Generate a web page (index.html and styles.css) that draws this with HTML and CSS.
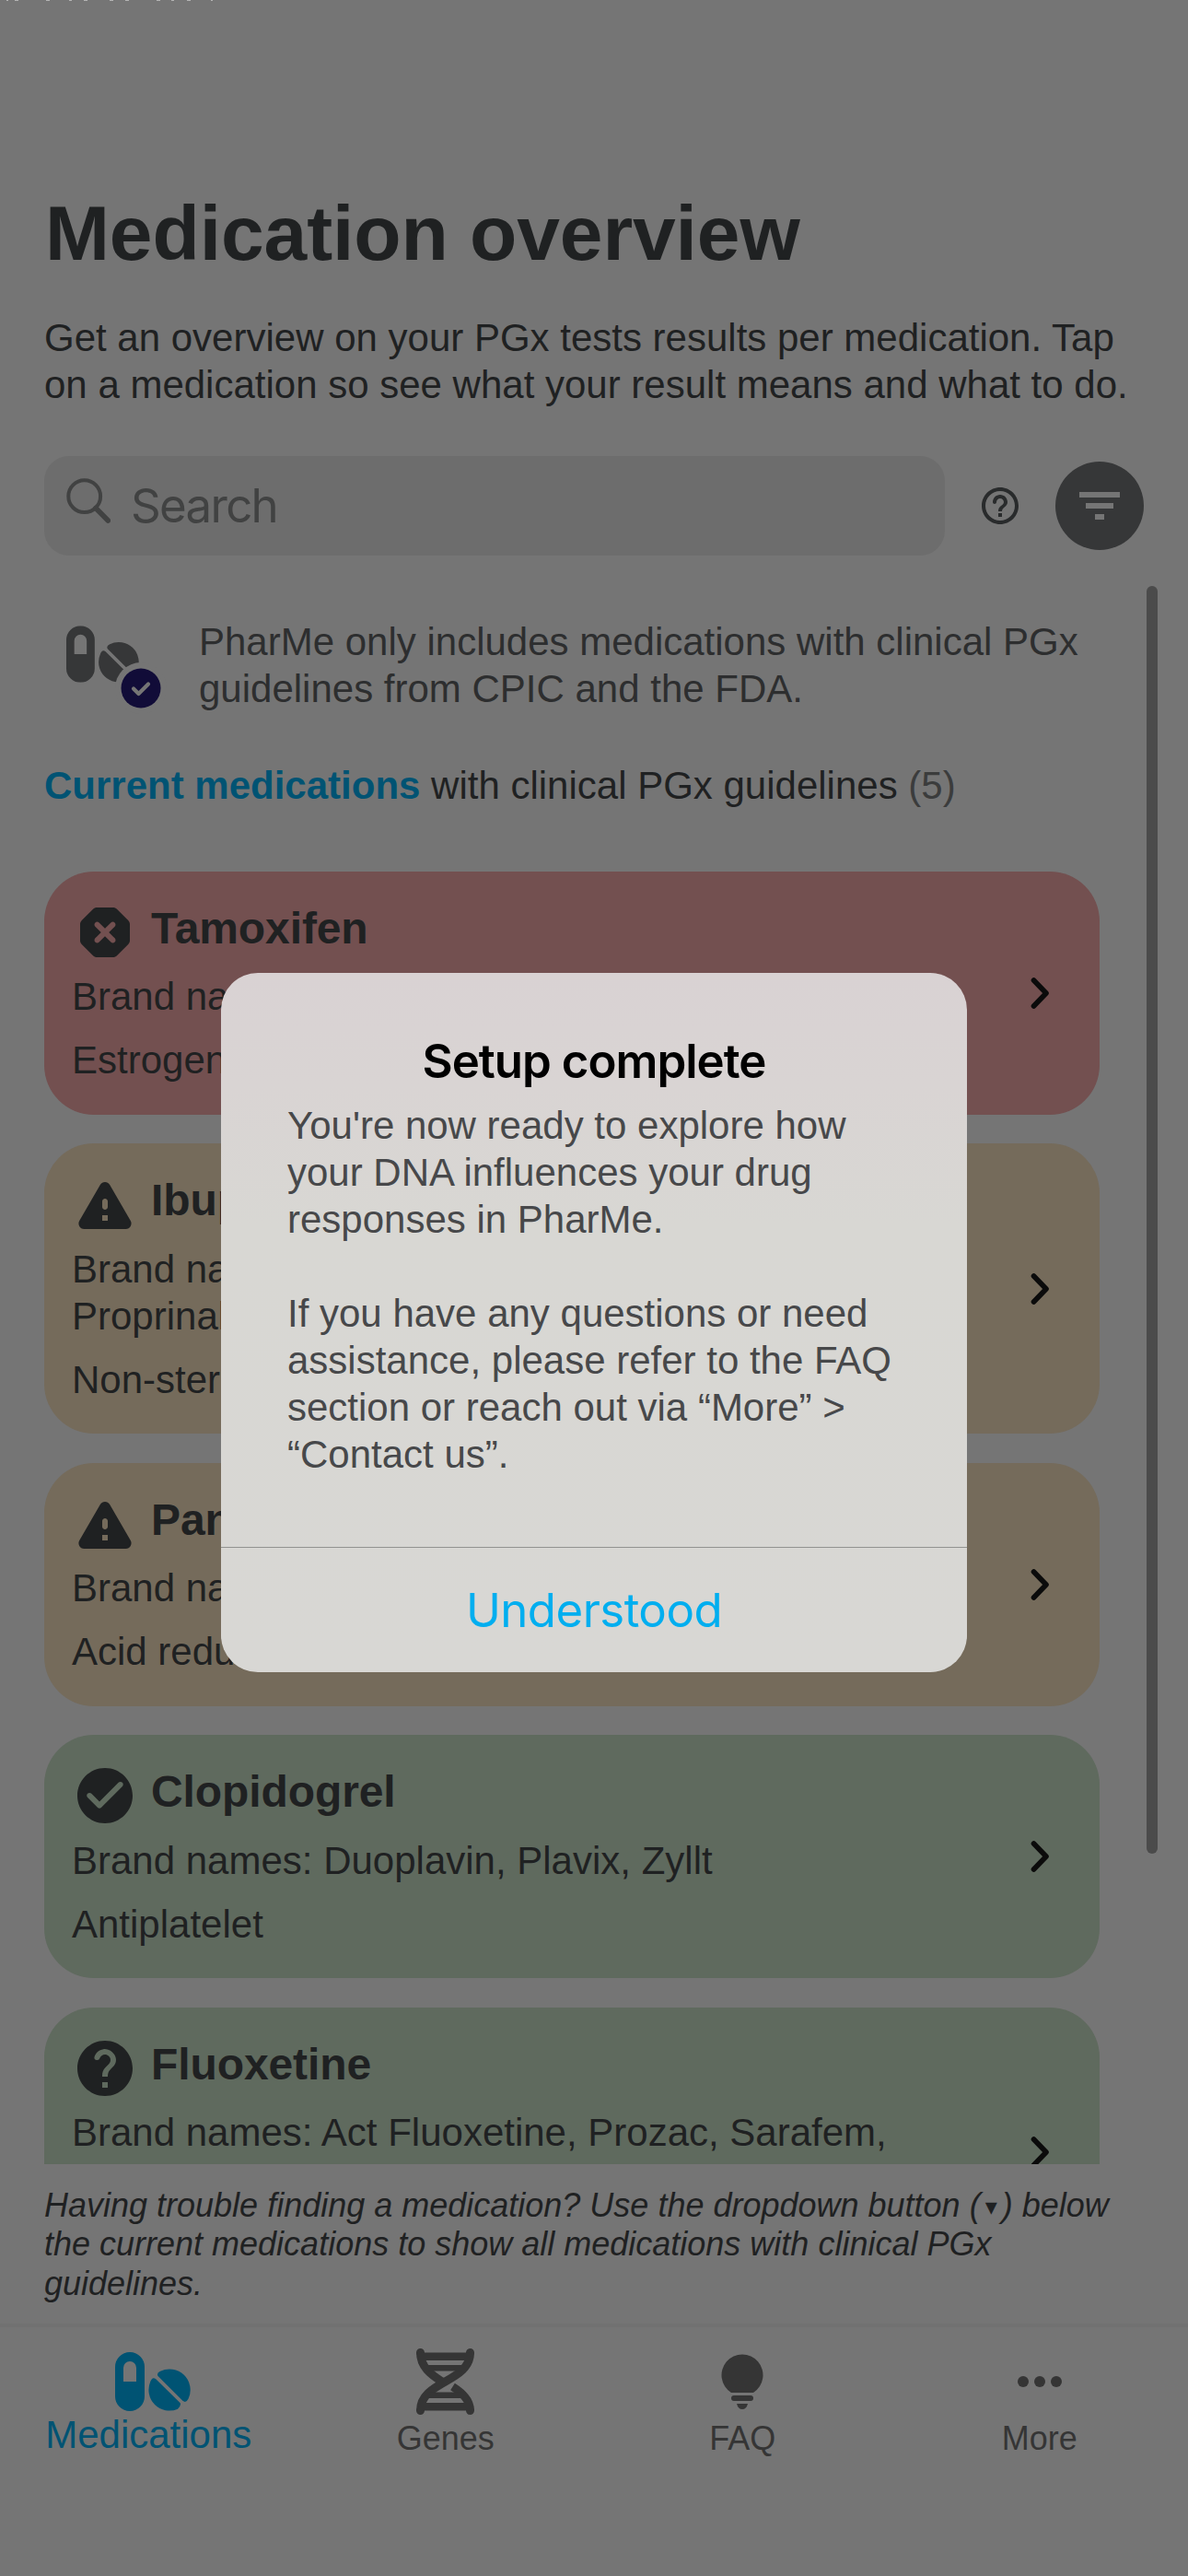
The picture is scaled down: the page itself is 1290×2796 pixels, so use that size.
FILE: index.html
```html
<!DOCTYPE html>
<html lang="en">
<head>
<meta charset="utf-8">
<title>Medication overview</title>
<link rel="stylesheet" href="styles.css">
</head>
<body>
<svg width="0" height="0" class="defs" aria-hidden="true">
  <symbol id="danger" viewBox="0 0 24 24"><path d="M14.9 3H9.1c-.53 0-1.04.21-1.42.59L3.59 7.68C3.21 8.06 3 8.57 3 9.1v5.8c0 .53.21 1.04.59 1.42l4.09 4.09c.38.38.89.59 1.42.59h5.8c.53 0 1.04-.21 1.42-.59l4.09-4.09c.38-.38.59-.89.59-1.42V9.1c0-.53-.21-1.04-.59-1.42l-4.09-4.09C15.94 3.21 15.43 3 14.9 3zm.64 12.54c-.39.39-1.02.39-1.41 0L12 13.41l-2.12 2.12c-.39.39-1.02.39-1.41 0-.39-.39-.39-1.02 0-1.41L10.59 12 8.46 9.88c-.39-.39-.39-1.02 0-1.41.39-.39 1.02-.39 1.41 0L12 10.59l2.12-2.12c.39-.39 1.02-.39 1.41 0 .39.39.39 1.02 0 1.41L13.41 12l2.12 2.12c.4.39.4 1.03.01 1.42z"/></symbol>
  <symbol id="warn" viewBox="0 0 24 24"><path d="M4.47 21h15.06c1.54 0 2.5-1.67 1.73-3L13.73 4.99c-.77-1.33-2.69-1.33-3.46 0L2.74 18c-.77 1.33.19 3 1.73 3zM12 14c-.55 0-1-.45-1-1v-2c0-.55.45-1 1-1s1 .45 1 1v2c0 .55-.45 1-1 1zm1 4h-2v-2h2v2z"/></symbol>
  <symbol id="check" viewBox="0 0 24 24"><path d="M12 2C6.48 2 2 6.48 2 12s4.48 10 10 10 10-4.48 10-10S17.52 2 12 2zM9.29 16.29 5.7 12.7c-.39-.39-.39-1.02 0-1.41.39-.39 1.02-.39 1.41 0L10 14.17l6.88-6.88c.39-.39 1.02-.39 1.41 0 .39.39.39 1.02 0 1.41l-7.59 7.59c-.38.39-1.02.39-1.41 0z"/></symbol>
  <symbol id="help" viewBox="0 0 24 24"><path d="M12 2C6.48 2 2 6.48 2 12s4.48 10 10 10 10-4.48 10-10S17.52 2 12 2zm1 17h-2v-2h2v2zm2.07-7.75-.9.92c-.5.51-.86.97-1.04 1.69-.08.32-.13.68-.13 1.14h-2v-.5c0-.46.08-.9.22-1.31.2-.58.53-1.1.95-1.52l1.24-1.26c.46-.44.68-1.1.55-1.8-.13-.72-.69-1.33-1.39-1.53-1.11-.31-2.14.32-2.47 1.27-.12.37-.43.65-.82.65h-.3C8.4 9 8 8.44 8.16 7.88c.43-1.47 1.68-2.59 3.23-2.83 1.52-.24 2.97.55 3.87 1.8 1.18 1.63.83 3.38-.19 4.4z"/></symbol>
  <symbol id="chevron" viewBox="0 0 24 36"><path d="M4.500 4L18 18 4.500 32" fill="none" stroke="currentColor" stroke-width="5.600" stroke-linecap="round" stroke-linejoin="round"/></symbol>
  <symbol id="capsule" viewBox="0 0 82 64"><path fill-rule="evenodd" d="M16 0a16 16 0 0 1 16 16v32a16 16 0 0 1-32 0V16A16 16 0 0 1 16 0zM9 32h14V17a7 7 0 0 0-14 0z"/></symbol>
  <symbol id="tablet" viewBox="0 0 82 64"><path d="M49 20.800A22.600 22.600 0 0 1 79.600 50.500q-2.300 5-6 2.600L46.500 26q-1.800-3.200 2.500-5.200z"/><path d="M38.300 32q2-5.500 5.700-3L70.500 55q1.800 2.500-2.500 6.700A22.600 22.600 0 0 1 38.300 32z"/></symbol>
</svg>

<div class="screen">
  <svg class="edge" width="240" height="1" viewBox="0 0 240 1"><path d="M7 0h2v1H7zM16 0h4v1h-4zM50 0h4v1h-4zM75 0h3v1h-3zM91 0h4v1h-4zM119 0h4v1h-4zM136 0h4v1h-4zM170 0h4v1h-4zM186 0h3v1h-3zM203 0h4v1h-4zM229 0h2v1h-2z"/></svg>
  <header class="intro">
    <h1>Medication overview</h1>
    <p>Get an overview on your PGx tests results per medication. Tap<br>on a medication so see what your result means and what to do.</p>
  </header>

  <div class="tools">
    <div class="search">
      <svg class="line" width="48" height="50" viewBox="0 0 48 50"><circle cx="19.700" cy="19.700" r="17.400" stroke-width="4"/><path d="M32 32.500l13.300 13.500" stroke-width="5.600" stroke-linecap="round"/></svg>
      <span>Search</span>
    </div>
    <svg class="help" width="48" height="48" viewBox="0 0 24 24"><path d="M12 2C6.480 2 2 6.480 2 12s4.480 10 10 10 10-4.480 10-10S17.520 2 12 2zm0 18c-4.410 0-8-3.590-8-8s3.590-8 8-8 8 3.590 8 8-3.590 8-8 8zm-1-4h2v2h-2v-2zm1-10c-2.210 0-4 1.790-4 4 0 .55.45 1 1 1s1-.45 1-1c0-1.100.9-2 2-2s2 .9 2 2c0 2-3 1.750-3 5h2c0-2.250 3-2.500 3-5 0-2.210-1.790-4-4-4z"/></svg>
    <div class="filter"><i></i><i></i><i></i></div>
  </div>

  <main class="list">
    <div class="note">
      <div class="pills">
        <svg width="79" height="62" viewBox="0 0 82 64"><use href="#capsule"/><use href="#tablet"/></svg>
        <svg class="badge" width="56" height="56" viewBox="0 0 56 56"><circle class="ring" cx="28" cy="28" r="28"/><circle class="disc" cx="28" cy="28" r="21.500"/><path d="M20 28.500l5.500 5.500L36 23.500" fill="none" stroke="#757575" stroke-width="4.200" stroke-linecap="round" stroke-linejoin="round"/></svg>
      </div>
      <p>PharMe only includes medications with clinical PGx<br>guidelines from CPIC and the FDA.</p>
    </div>
    <h2><b>Current medications</b> with clinical PGx guidelines <small>(5)</small></h2>

    <div class="cards">
      <section class="card red">
        <div><h3><svg><use href="#danger"/></svg>Tamoxifen</h3><p>Brand names: Nolvadex</p><p class="kind">Estrogen modulator</p></div>
        <svg class="go"><use href="#chevron"/></svg>
      </section>
      <section class="card tan">
        <div><h3><svg><use href="#warn"/></svg>Ibuprofen</h3><p>Brand names: Advil, Motrin,<br>Proprinal</p><p class="kind">Non-steroidal</p></div>
        <svg class="go"><use href="#chevron"/></svg>
      </section>
      <section class="card tan">
        <div><h3><svg><use href="#warn"/></svg>Pantoprazole</h3><p>Brand names: Protonix</p><p class="kind">Acid reducer</p></div>
        <svg class="go"><use href="#chevron"/></svg>
      </section>
      <section class="card green">
        <div><h3><svg><use href="#check"/></svg>Clopidogrel</h3><p>Brand names: Duoplavin, Plavix, Zyllt</p><p class="kind">Antiplatelet</p></div>
        <svg class="go"><use href="#chevron"/></svg>
      </section>
      <section class="card green">
        <div><h3><svg><use href="#help"/></svg>Fluoxetine</h3><p>Brand names: Act Fluoxetine, Prozac, Sarafem,<br>Symbyax</p><p class="kind">Antidepressant</p></div>
        <svg class="go"><use href="#chevron"/></svg>
      </section>
    </div>
    <div class="thumb"></div>
  </main>

  <p class="trouble">Having trouble finding a medication? Use the dropdown button (<span>▾</span>) below<br>the current medications to show all medications with clinical PGx<br>guidelines.</p>

  <nav>
    <a class="on"><svg width="82" height="64" viewBox="0 0 82 64"><use href="#capsule"/><use href="#tablet"/></svg>Medications</a>
    <a><svg class="line" width="63" height="72" viewBox="0 0 63 72"><path d="M58.500 4.500C58.500 37 4.500 35 4.500 67.500M4.500 4.500C4.500 20 16 28.500 28 36M39.500 41.500C50 48 58.500 56 58.500 67.500" stroke-width="9"/><path d="M4.500 4.500h0M58.500 4.500h0M4.500 67.500h0M58.500 67.500h0" stroke-width="9" stroke-linecap="round"/><path d="M5 8.800h53M5 63.300h53" stroke-width="8.600"/><path d="M13 21.300h37M14 50.700h35" stroke-width="6.600"/></svg>Genes</a>
    <a><svg width="46" height="60" viewBox="0 0 46 60"><path d="M11 42a22.500 22.500 0 1 1 24 0z"/><rect x="11" y="45" width="24" height="6" rx="3"/><path d="M17 54h12q-1.500 6-6 6t-6-6z"/></svg>FAQ</a>
    <a><svg width="48" height="12" viewBox="0 0 48 12"><circle cx="6" cy="6" r="6"/><circle cx="24" cy="6" r="6"/><circle cx="42" cy="6" r="6"/></svg>More</a>
  </nav>

  <div class="dialog">
    <div class="message">
      <h4>Setup complete</h4>
      <p>You're now ready to explore how<br>your DNA influences your drug<br>responses in PharMe.</p>
      <p>If you have any questions or need<br>assistance, please refer to the FAQ<br>section or reach out via “More” &gt;<br>“Contact us”.</p>
    </div>
    <div class="action">Understood</div>
  </div>
</div>
</body>
</html>
```
FILE: styles.css
```css
* { box-sizing: border-box; margin: 0; padding: 0; }
body { background: #757575; font: 42px/51px "Liberation Sans", Arial, sans-serif; color: #1f2122; }
svg { fill: currentColor; flex: none; display: block; }
svg.line { fill: none; stroke: currentColor; }
.defs { position: absolute; }
.screen { position: relative; display: flex; flex-direction: column; width: 1290px; height: 2796px; overflow: hidden; white-space: nowrap; }
.edge { color: #b4b4b4; }

.intro { height: 494px; padding: 204px 48px 0; }
h1 { padding-left: 1px; font-size: 84px; line-height: 96px; letter-spacing: -.1px; }
.intro p { margin-top: 40px; }

.tools { display: flex; align-items: center; height: 108px; padding: 0 48px; }
.search { display: flex; align-items: center; width: 978px; height: 108px; padding-left: 24px; border-radius: 27px; background: #6d6d6d; color: #414242; }
.search svg { margin-bottom: 10px; }
.search span { margin-left: 22px; font: 400 51px/60px Inter, sans-serif; letter-spacing: -1.700px; }
.help { margin-left: 36px; color: #292b2c; }
.filter { display: flex; flex-direction: column; align-items: center; gap: 6px; width: 96px; height: 96px; margin-left: 36px; padding-top: 33px; border-radius: 50%; background: #363738; }
.filter i { height: 6px; background: #757575; }
.filter i:nth-child(1) { width: 44px; }
.filter i:nth-child(2) { width: 30px; }
.filter i:nth-child(3) { width: 10px; }

.list { position: relative; height: 1746px; padding: 68px 96px 0 48px; overflow: hidden; }
.note { display: flex; height: 102px; color: #2d2e2f; }
.pills { position: relative; width: 168px; padding: 8px 0 0 24px; color: #363738; }
.badge { position: absolute; left: 77px; top: 48px; }
.ring { fill: #757575; }
.disc { fill: #110c38; }
h2 { margin-top: 54px; font-size: 42px; line-height: 51px; font-weight: 400; }
h2 b { color: #005373; }
h2 small { font-size: 42px; color: #3b3c3c; }
.cards { display: flex; flex-direction: column; gap: 31.500px; margin-top: 67.600px; }
.card { display: flex; align-items: center; justify-content: space-between; padding: 30px 51px 18px 30px; border-radius: 54px; }
.card > div { height: 100%; }
.red { background: #735050; }
.tan { background: #756b5b; }
.green { background: #5f6a5e; }
h3 { display: flex; align-items: flex-start; height: 72px; font-size: 48px; line-height: 64px; letter-spacing: -.1px; }
h3 svg { width: 72px; height: 72px; margin-right: 14px; }
.card p { margin-top: 8.500px; }
.card .kind { margin-top: 18px; margin-bottom: 15.500px; }
.go { width: 24px; height: 36px; margin: 0 1px 12px 0; color: #0b0b0b; }
.thumb { position: absolute; left: 1245px; top: 33px; width: 12px; height: 1376px; border-radius: 6px; background: #4b4b4b; }

.trouble { height: 173px; padding: 24px 48px 0; font-size: 36px; line-height: 42.300px; font-style: italic; }
.trouble span { padding: 0 5px; font-family: "DejaVu Sans"; font-size: 26px; line-height: 0; vertical-align: 2px; }

nav { display: grid; grid-template-columns: repeat(4, 1fr); height: 274px; border-top: 4px solid #717171; color: #353535; font-size: 36px; line-height: 42px; }
nav a { display: grid; grid-template-rows: 74px 42px; row-gap: 4px; padding-top: 22px; place-items: center; align-content: start; }
nav .on { color: #005373; font-size: 42px; row-gap: 0; }
nav .on svg { margin-left: 9px; }

.dialog { position: absolute; left: 240px; top: 1056px; width: 810px; height: 759px; border-radius: 40px; background: linear-gradient(#d9d2d3 0, #d9d4d3 16%, #d8d7d3 36%, #d8d7d4 100%); color: #47484a; }
.message { height: 624px; padding: 66px 72px 0; border-bottom: 1px solid #929290; }
h4 { text-align: center; font: 600 51px/60px Inter, sans-serif; color: #000; letter-spacing: -1px; }
.message p { margin: 0 0 51px; }
.message h4 + p { margin-top: 14px; }
.action { display: grid; place-items: center; height: 135px; font: 400 51px/60px Inter, sans-serif; letter-spacing: -.550px; color: #00aeef; }
```
